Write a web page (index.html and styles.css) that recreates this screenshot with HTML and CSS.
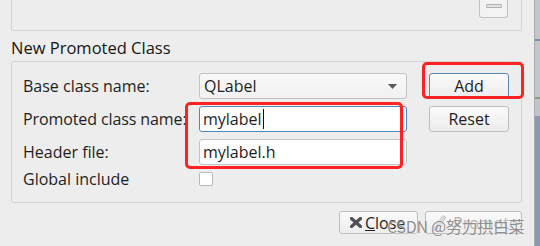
FILE: index.html
```html
<!DOCTYPE html>
<html>
<head>
<meta charset="utf-8">
<link rel="stylesheet" href="styles.css">
</head>
<body>
<div class="main">
  <div class="topbox">
    <div class="mini-btn"><span class="mini-bar"></span></div>
  </div>
  <div class="title">New Promoted Class</div>
  <div class="group">
    <div class="label">Base class name:</div>
    <div class="combo"><span>QLabel</span><svg class="arrow" width="9" height="5" viewBox="0 0 9 5"><path d="M0 0H9L4.5 5Z" fill="#5a5a5a"/></svg></div>
    <div class="btn btn-default">Add</div>

    <div class="label label-long">Promoted class name:</div>
    <div class="input focus"><span class="caret">mylabel</span></div>
    <div class="btn">Reset</div>

    <div class="label">Header file:</div>
    <div class="input">mylabel.h</div>
    <div></div>

    <div class="label">Global include</div>
    <div><div class="check"></div></div>
    <div></div>
  </div>
  <div class="footer">
    <div class="btn btn-sm close"><svg width="12" height="11" viewBox="0 0 12 11"><path d="M1.5 1.5L10.5 9.5M10.5 1.5L1.5 9.5" stroke="#505050" stroke-width="3.2" stroke-linecap="round"/></svg><span><u>C</u>lose</span></div>
    <div class="btn btn-sm promote"><svg width="20" height="18" viewBox="0 0 20 18"><path d="M13 1.5L16 3.5L9 12L6.5 10.5Z" fill="#dcdcdc" stroke="#c4c4c4"/><path d="M6 11.5L8.5 13C8 15.5 5.5 16.5 3 16.5C4.2 15.5 4 13 6 11.5Z" fill="#d0d0d0" stroke="#c0c0c0"/></svg><span>Promote</span></div>
  </div>
</div>
<div class="strip"></div>
<div class="mark mark-add"></div>
<div class="mark mark-fields"></div>
<div class="watermark">CSDN @努力拱白菜</div>
</body>
</html>
```
FILE: styles.css
```css
html, body {
  margin: 0;
  padding: 0;
}
body {
  width: 540px;
  height: 246px;
  overflow: hidden;
  display: flex;
  background: #ededed;
  font-family: "Open Sans", "Noto Sans", sans-serif;
  font-size: 16px;
  color: #1e1e1e;
  position: relative;
}
.main {
  width: 534px;
  padding: 0 12px 0 11px;
  box-sizing: border-box;
  display: flex;
  flex-direction: column;
}
.strip {
  flex: 1;
  background: linear-gradient(#c3c7cc 0, #c3c7cc 39px, #7d8fae 39px, #7d8fae 41px, #c3c7cc 41px, #c3c7cc 97px, #7fa37a 97px, #7fa37a 99px, #c0c5cb 99px, #c0c5cb 116px, #8b98b3 116px, #8b98b3 100%);
  border-left: 1px solid #a8adb3;
}
.topbox {
  height: 31px;
  box-sizing: border-box;
  border: 1px solid #d4d4d4;
  border-top: none;
  border-radius: 0 0 2px 2px;
  display: flex;
  justify-content: flex-end;
  padding-right: 13px;
}
.mini-btn {
  width: 29px;
  height: 18px;
  box-sizing: border-box;
  border: 1px solid #c2c2c2;
  border-top: none;
  border-radius: 0 0 3px 3px;
  background: #f3f3f3;
  display: flex;
  justify-content: center;
  padding-top: 4px;
}
.mini-bar {
  width: 16px;
  height: 4px;
  box-sizing: border-box;
  border: 1px solid #b0b0b0;
  border-radius: 1px;
  background: #e4e4e4;
}
.title {
  height: 28px;
  padding-top: 2px;
  line-height: 30px;
  font-size: 16.5px;
  color: #151515;
}
.group {
  border: 1px solid #d3d3d3;
  border-radius: 2px;
  padding: 11px 11px 16px 11px;
  display: grid;
  grid-template-columns: 176px 208px 102px;
  grid-template-rows: 26px 26px 26px 14px;
  row-gap: 7px;
  align-items: center;
}
.label {
  white-space: nowrap;
  line-height: 20px;
}
.label-long {
  letter-spacing: -0.1px;
  position: relative;
  z-index: 1;
}
.combo {
  height: 26px;
  box-sizing: border-box;
  border: 1px solid #c3c3c3;
  border-radius: 3px;
  background: linear-gradient(#f9f9f9, #f1f1f1);
  display: flex;
  align-items: center;
  justify-content: space-between;
  padding: 0 9px 0 4px;
}
.input {
  height: 26px;
  box-sizing: border-box;
  border: 1px solid #c3c3c3;
  border-radius: 3px;
  background: #fff;
  display: flex;
  align-items: center;
  padding-left: 3px;
}
.input.focus {
  border-color: #4d88c4;
}
.caret {
  border-right: 1px solid #111;
  padding-right: 1px;
  line-height: 20px;
}
.check {
  width: 14px;
  height: 14px;
  box-sizing: border-box;
  border: 1px solid #b9b9b9;
  border-radius: 2px;
  background: #fff;
}
.btn {
  margin-left: 22px;
  width: 80px;
  height: 26px;
  box-sizing: border-box;
  border: 1px solid #bcbcbc;
  border-radius: 3px;
  background: linear-gradient(#fbfbfb, #ececec);
  display: flex;
  align-items: center;
  justify-content: center;
}
.btn-default {
  border-color: #5a86b3;
}
.footer {
  display: flex;
  justify-content: flex-end;
  gap: 7px;
  margin-top: 8px;
}
.btn-sm {
  margin-left: 0;
  height: 23px;
  gap: 3px;
}
.close {
  width: 79px;
  justify-content: flex-start;
  padding-left: 10px;
}
.promote {
  width: 97px;
  color: #b3b3b3;
  justify-content: flex-start;
  padding-left: 4px;
}
.mark {
  position: absolute;
  z-index: 2;
  border: 3px solid #ff2222;
  border-radius: 5px;
  box-sizing: border-box;
}
.mark-add {
  left: 422px;
  top: 62px;
  width: 102px;
  height: 37px;
}
.mark-fields {
  left: 185px;
  top: 102px;
  width: 218px;
  height: 67px;
}
.watermark {
  position: absolute;
  z-index: 3;
  left: 387px;
  top: 214px;
  font-family: "Noto Sans CJK SC", "Noto Sans", sans-serif;
  font-size: 16px;
  letter-spacing: -0.3px;
  color: rgba(115, 115, 115, 0.8);
  text-shadow: 0 0 2px rgba(255, 255, 255, 0.9);
  white-space: nowrap;
}
```
